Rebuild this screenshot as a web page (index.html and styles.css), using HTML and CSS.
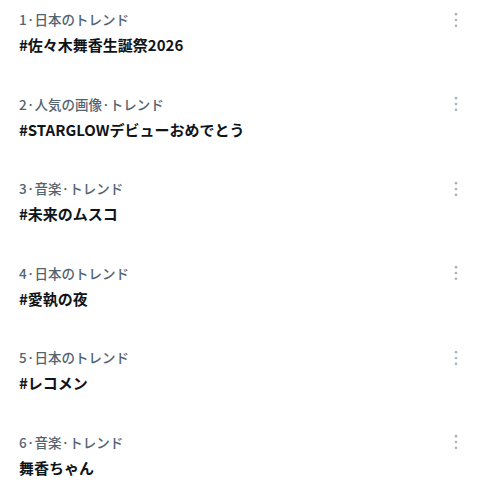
FILE: index.html
```html
<!DOCTYPE html>
<html lang="ja">
<head>
    <meta charset="UTF-8">
    <meta name="viewport" content="width=device-width, initial-scale=1.0">
    <title>トレンド</title>
    <link rel="stylesheet" href="styles.css">
</head>
<body>
    <div class="trends">
        <div class="trend">
            <div class="trend-text">
                <div class="meta">1·日本のトレンド</div>
                <div class="name">#佐々木舞香生誕祭2026</div>
            </div>
            <button class="more" aria-label="もっと見る">
                <svg viewBox="0 0 24 24"><circle cx="12" cy="5" r="1.6"/><circle cx="12" cy="12" r="1.6"/><circle cx="12" cy="19" r="1.6"/></svg>
            </button>
        </div>
        <div class="trend">
            <div class="trend-text">
                <div class="meta">2·人気の画像·トレンド</div>
                <div class="name">#STARGLOWデビューおめでとう</div>
            </div>
            <button class="more" aria-label="もっと見る">
                <svg viewBox="0 0 24 24"><circle cx="12" cy="5" r="1.6"/><circle cx="12" cy="12" r="1.6"/><circle cx="12" cy="19" r="1.6"/></svg>
            </button>
        </div>
        <div class="trend">
            <div class="trend-text">
                <div class="meta">3·音楽·トレンド</div>
                <div class="name">#未来のムスコ</div>
            </div>
            <button class="more" aria-label="もっと見る">
                <svg viewBox="0 0 24 24"><circle cx="12" cy="5" r="1.6"/><circle cx="12" cy="12" r="1.6"/><circle cx="12" cy="19" r="1.6"/></svg>
            </button>
        </div>
        <div class="trend">
            <div class="trend-text">
                <div class="meta">4·日本のトレンド</div>
                <div class="name">#愛執の夜</div>
            </div>
            <button class="more" aria-label="もっと見る">
                <svg viewBox="0 0 24 24"><circle cx="12" cy="5" r="1.6"/><circle cx="12" cy="12" r="1.6"/><circle cx="12" cy="19" r="1.6"/></svg>
            </button>
        </div>
        <div class="trend">
            <div class="trend-text">
                <div class="meta">5·日本のトレンド</div>
                <div class="name">#レコメン</div>
            </div>
            <button class="more" aria-label="もっと見る">
                <svg viewBox="0 0 24 24"><circle cx="12" cy="5" r="1.6"/><circle cx="12" cy="12" r="1.6"/><circle cx="12" cy="19" r="1.6"/></svg>
            </button>
        </div>
        <div class="trend">
            <div class="trend-text">
                <div class="meta">6·音楽·トレンド</div>
                <div class="name">舞香ちゃん</div>
            </div>
            <button class="more" aria-label="もっと見る">
                <svg viewBox="0 0 24 24"><circle cx="12" cy="5" r="1.6"/><circle cx="12" cy="12" r="1.6"/><circle cx="12" cy="19" r="1.6"/></svg>
            </button>
        </div>
    </div>
</body>
</html>
```

FILE: styles.css
```css
body {
    margin: 0;
    background-color: #fff;
    font-family: "Noto Sans CJK JP", "Noto Sans", sans-serif;
    color: #0f1419;
}
.trends {
    display: flex;
    flex-direction: column;
}
.trend {
    height: 84.5px;
    display: flex;
    align-items: flex-start;
    justify-content: space-between;
    padding: 8px 12px 0 19px;
    box-sizing: border-box;
}
.trend-text {
    display: flex;
    flex-direction: column;
    gap: 4px;
}
.meta {
    font-size: 13.5px;
    line-height: 22px;
    color: #536471;
    font-weight: 500;
}
.name {
    font-size: 15px;
    line-height: 22px;
    font-weight: 700;
}
.more {
    width: 24px;
    height: 24px;
    padding: 0;
    margin-top: 1px;
    border: none;
    background: none;
    cursor: pointer;
}
.more svg {
    width: 20px;
    height: 20px;
    fill: #aab3bb;
}
```
